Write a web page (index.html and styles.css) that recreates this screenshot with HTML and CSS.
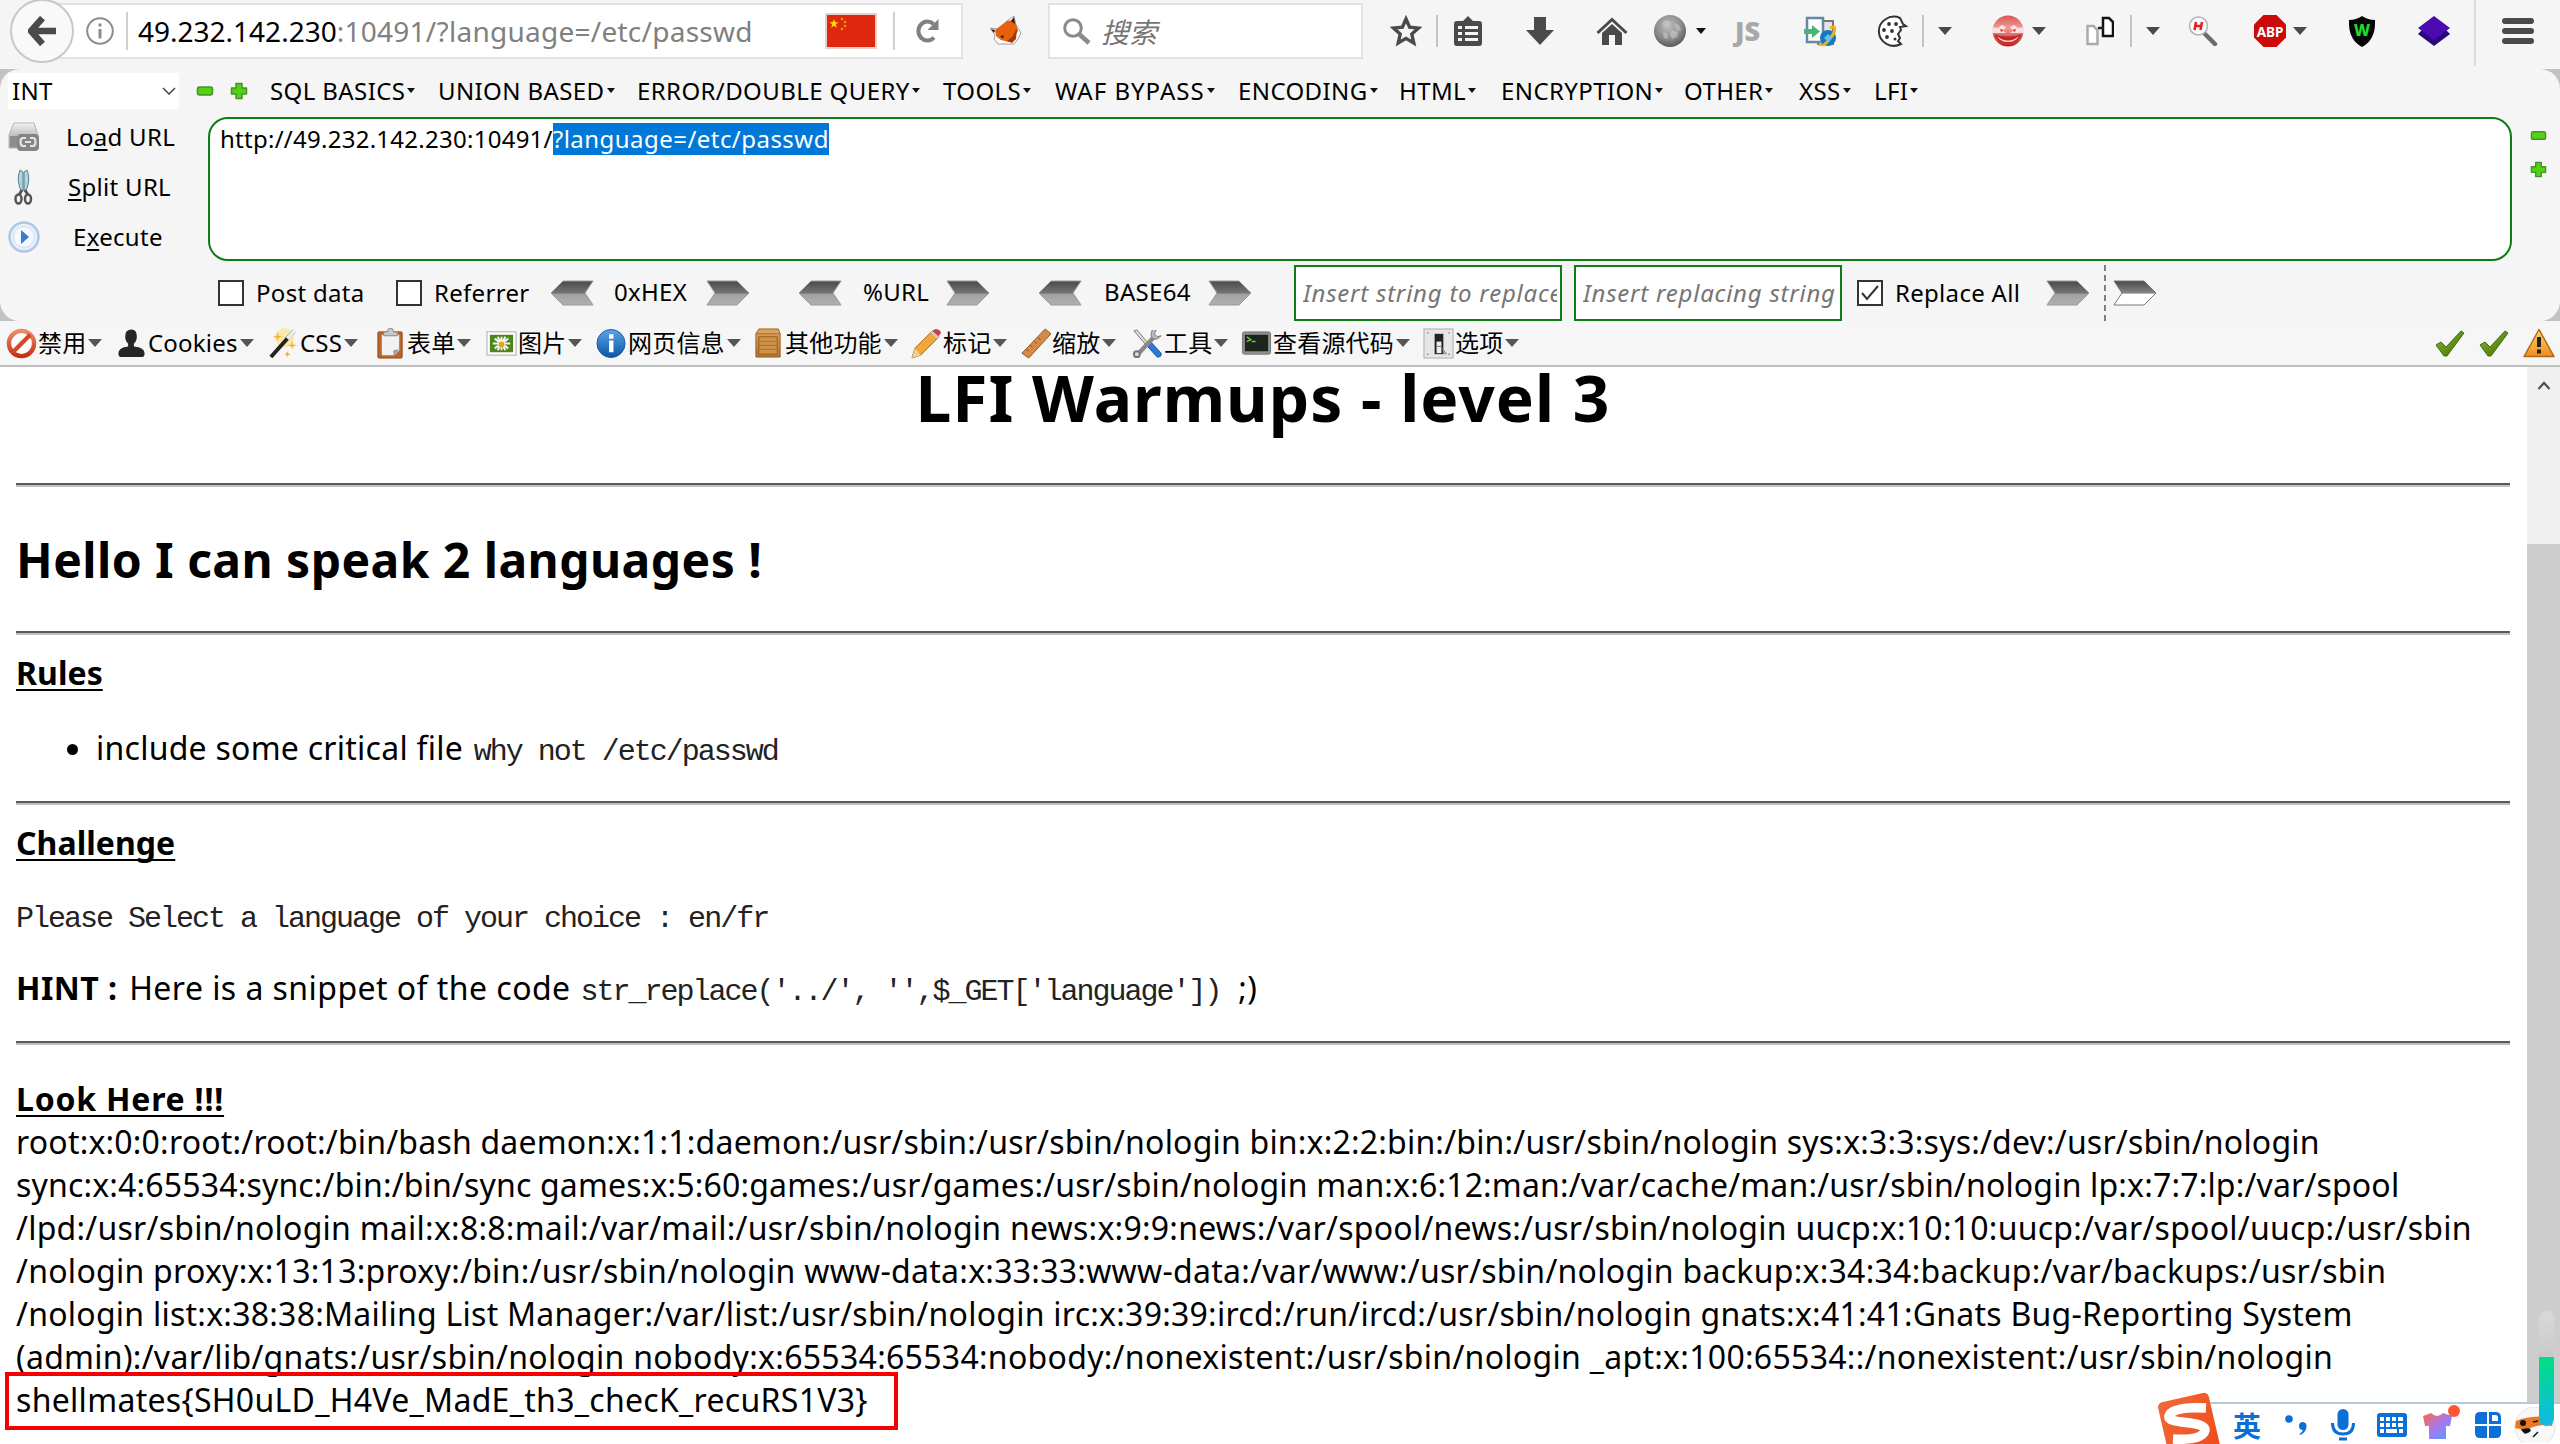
FILE: index.html
```html
<!DOCTYPE html>
<html lang="zh-CN">
<head>
<meta charset="utf-8">
<title>LFI Warmups - level 3</title>
<link rel="stylesheet" href="styles.css">
</head>
<body>
<svg width="0" height="0" class="defs">
  <defs>
    <linearGradient id="gArrow" x1="0" y1="0" x2="0" y2="1"><stop offset="0" stop-color="#4a4a4a"/><stop offset=".5" stop-color="#757575"/><stop offset=".55" stop-color="#a2a2a2"/><stop offset="1" stop-color="#b0b0b0"/></linearGradient>
    <linearGradient id="gArrowW" x1="0" y1="0" x2="0" y2="1"><stop offset="0" stop-color="#4a4a4a"/><stop offset=".5" stop-color="#858585"/><stop offset=".55" stop-color="#fff"/><stop offset="1" stop-color="#fff"/></linearGradient>
    <linearGradient id="gRed" x1="0" y1="0" x2="0" y2="1"><stop offset="0" stop-color="#ef8a6c"/><stop offset="1" stop-color="#c23310"/></linearGradient>
    <linearGradient id="gBlue" x1="0" y1="0" x2="0" y2="1"><stop offset="0" stop-color="#5aa5e6"/><stop offset="1" stop-color="#0b55a8"/></linearGradient>
    <linearGradient id="gWood" x1="0" y1="0" x2="0" y2="1"><stop offset="0" stop-color="#e0a561"/><stop offset="1" stop-color="#b47430"/></linearGradient>
    <linearGradient id="gGreen" x1="0" y1="0" x2="1" y2="1"><stop offset="0" stop-color="#8cb832"/><stop offset="1" stop-color="#3c6c00"/></linearGradient>
    <linearGradient id="gWarn" x1="0" y1="0" x2="0" y2="1"><stop offset="0" stop-color="#ffd860"/><stop offset="1" stop-color="#f08c1c"/></linearGradient>
    <linearGradient id="gSilver" x1="0" y1="0" x2="0" y2="1"><stop offset="0" stop-color="#f2f2f2"/><stop offset="1" stop-color="#8c8c8c"/></linearGradient>
    <radialGradient id="gGlobe" cx=".45" cy=".35" r=".65"><stop offset="0" stop-color="#bdbdbd"/><stop offset=".6" stop-color="#8e8e8e"/><stop offset="1" stop-color="#5a5a5a"/></radialGradient>
    <linearGradient id="gFace" x1="0" y1="0" x2="0" y2="1"><stop offset="0" stop-color="#d95454"/><stop offset=".4" stop-color="#f09a94"/><stop offset="1" stop-color="#c42020"/></linearGradient>
    <linearGradient id="gShirt" x1="0" y1="0" x2="1" y2="1"><stop offset="0" stop-color="#ff6a3c"/><stop offset=".5" stop-color="#a878f0"/><stop offset="1" stop-color="#4aa0ff"/></linearGradient>
    <linearGradient id="gLogo" x1="0" y1="0" x2="1" y2="1"><stop offset="0" stop-color="#f06a38"/><stop offset="1" stop-color="#f04a18"/></linearGradient>
    <symbol id="caret" viewBox="0 0 14 8"><path d="M0 0h14L7 8z" fill="#4a4a4a"/></symbol>
    <symbol id="left" viewBox="0 0 44 26"><path d="M13 1h30l-8 12 8 12H13L1 13z" fill="url(#gArrow)" stroke="#999"/></symbol>
    <symbol id="right" viewBox="0 0 44 26"><path d="M1 1h30l12 12-12 12H1l8-12z" fill="url(#gArrow)" stroke="#999"/></symbol>
    <symbol id="rightw" viewBox="0 0 44 26"><path d="M1 1h30l12 12-12 12H1l8-12z" fill="url(#gArrowW)" stroke="#777"/></symbol>
    <symbol id="minus" viewBox="0 0 18 18"><rect x="1.500" y="5" width="15" height="8" rx="2" fill="#4fd312" stroke="#4c8f2c" stroke-width="1.500"/></symbol>
    <symbol id="plus" viewBox="0 0 18 18"><path d="M6 1.500h6V6h4.500v6H12v4.500H6V12H1.500V6H6z" fill="#4fd312" stroke="#4c8f2c" stroke-width="1.500" stroke-linejoin="round"/></symbol>
    <symbol id="check" viewBox="0 0 30 27"><path d="M1 15l5-3 5 5L26 1l3 2-17 23H9z" fill="url(#gGreen)" stroke="#446c10"/></symbol>
  </defs>
</svg>

<header class="nav">
  <button class="back"><svg width="28" height="30" viewBox="0 0 28 30"><path d="M14.500 2L3 15l11.500 13M4 15h24" fill="none" stroke="#4a4a4a" stroke-width="6.500" stroke-linejoin="round"/></svg></button>
  <div class="urlbar">
    <svg class="info" width="28" height="28" viewBox="0 0 28 28"><circle cx="14" cy="14" r="12.800" fill="none" stroke="#8c8c8c" stroke-width="2"/><path d="M12.500 6.500h3v3h-3zM12.500 12h3v9.500h-3z" fill="#8c8c8c"/></svg>
    <i class="rule"></i>
    <span class="address"><b>49.232.142.230</b>:10491/?language=/etc/passwd</span>
    <svg class="flag" width="52" height="36" viewBox="0 0 52 36"><rect x="1" y="1" width="50" height="34" fill="#de2910" stroke="#e8cfc8" stroke-width="2"/><path d="M9 6l1.200 3.300h3.300l-2.700 2 1 3.400L9 12.700l-2.800 2 1-3.400-2.700-2h3.300z" fill="#ffde00"/><g fill="#ee9a08"><circle cx="17" cy="6" r="1.200"/><circle cx="20" cy="9" r="1.200"/><circle cx="20" cy="13" r="1.200"/><circle cx="17" cy="16" r="1.200"/></g></svg>
    <i class="rule"></i>
    <svg class="reload" width="26" height="24" viewBox="0 0 26 24"><path d="M19.500 5A9 9.500 0 1 0 20 18.500" fill="none" stroke="#808080" stroke-width="4"/><path d="M24.500 0v11H13.500z" fill="#808080"/></svg>
  </div>
  <svg width="32" height="30" viewBox="0 0 32 30"><path d="M0 12l8 1 9-8 7-5 2 9 5 8-3 6-4 5H8l-4-5 1-4z" fill="#fff" stroke="#888" stroke-width=".8"/><path d="M5 14l12-9 6-1 3 4 2 7-4 7-5 4-8-2-5-4z" fill="#e8600c"/><path d="M10 21l3-2 1 3zM21 5l3-4 1 7zM1 13l4 1-1 3z" fill="#311"/><path d="M17 25l5-4 5-9-1 11-4 4z" fill="#a33a08"/></svg>
  <div class="search"><svg width="29" height="27" viewBox="0 0 29 27"><circle cx="10" cy="10" r="8.300" fill="none" stroke="#8a8a8a" stroke-width="3"/><path d="M16 16l10 9" stroke="#8a8a8a" stroke-width="4.500"/></svg><em>搜索</em></div>
  <svg width="32" height="32" viewBox="0 0 32 32"><path d="M16 4l3.600 8.200 9 .9-6.800 6 2 8.900L16 23.400 8.200 28l2-8.900-6.800-6 9-.9z" fill="none" stroke="#4a4a4a" stroke-width="3.400"/></svg>
  <i class="rule short"></i>
  <svg width="28" height="30" viewBox="0 0 28 30"><path d="M3 5h6l5-5 5 5h6q3 0 3 3v19q0 3-3 3H3q-3 0-3-3V8q0-3 3-3z" fill="#4a4a4a"/><path d="M4 10h4v3H4zM11 10h13v3H11zM4 16h4v3H4zM11 16h13v3H11zM4 22h4v3H4zM11 22h13v3H11z" fill="#f5f5f5"/></svg>
  <svg width="28" height="28" viewBox="0 0 28 28"><path d="M8 0h12v13h8L14 28 0 13h8z" fill="#4a4a4a"/></svg>
  <svg width="32" height="28" viewBox="0 0 32 28"><path d="M1.500 16L16 2.500 30.500 16" fill="none" stroke="#4a4a4a" stroke-width="3"/><path d="M16 7L6 16v12h7V18h6v10h7V16z" fill="#4a4a4a"/></svg>
  <svg width="32" height="32" viewBox="0 0 32 32"><circle cx="16" cy="16" r="16" fill="url(#gGlobe)"/><path d="M8 8l4-3 5 2-2 4-5 2zM20 8l5 2 2 5-4 1zM9 17l4 1 1 6-4-1zM18 15l6 2-1 5-5 2-2-4z" fill="#c9c9c9" opacity=".6"/></svg>
  <svg width="10" height="6"><path d="M0 0h10L5 6z" fill="#111"/></svg>
  <span class="js">JS</span>
  <svg width="32" height="30" viewBox="0 0 32 30"><path d="M14 5h15v23H14z" fill="#e4e4e4" stroke="#777" stroke-width="2"/><path d="M3 2h16v24H3z" fill="#fff" stroke="#6688a0" stroke-width="2.500"/><path d="M0 13h8V9l8 6.500L8 22v-4H0z" fill="#45b878"/><circle cx="24" cy="22" r="8" fill="#1678c0"/><path d="M17 27q-3 5 3 2Q30 20 31 13q0-3-5-1" fill="none" stroke="#f0b020" stroke-width="3"/><path d="M20 22l4-4 4 4-4 4z" fill="#5cc4f0"/></svg>
  <svg width="32" height="32" viewBox="0 0 32 32"><path d="M24 3A15 14.500 0 1 0 25 29L22 26l2-3-2-4 3-4-1-3 6-1-3-2z" fill="#fff" stroke="#333" stroke-width="2"/><g fill="#333"><circle cx="13" cy="9" r="1.900"/><circle cx="20" cy="9" r="1.900"/><circle cx="8" cy="15" r="1.900"/><circle cx="16" cy="16" r="1.900"/><circle cx="11" cy="22" r="1.900"/><circle cx="19" cy="24" r="1.500"/></g></svg>
  <i class="rule short"></i>
  <svg width="14" height="8"><use href="#caret"/></svg>
  <svg width="32" height="32" viewBox="0 0 32 32"><circle cx="16" cy="16" r="15.500" fill="url(#gFace)"/><path d="M0 12l6 1 4-3 4 2-3 4 3 2H0zM32 12l-6 1-4-3-4 2 3 4-3 2h14z" fill="#f7e0dc"/><path d="M8 14l4 1-3 2zM24 14l-4 1 3 2z" fill="#cf4040"/><path d="M2 19q14 5 28 0-3 9-14 9T2 19z" fill="#c62424"/><path d="M5 21q11 9 22 0-3 6-11 6T5 21z" fill="#f3cfcb"/></svg>
  <svg width="14" height="8"><use href="#caret"/></svg>
  <svg width="28" height="30" viewBox="0 0 28 30"><path d="M1.500 10h6l4 4v14h-10z" fill="#fff" stroke="#aaa" stroke-width="2.500"/><path d="M17 2h6l4 4v14H17z" fill="#fff" stroke="#111" stroke-width="2.500"/><path d="M12 12h6" stroke="#222" stroke-width="2.500"/></svg>
  <i class="rule short"></i>
  <svg width="14" height="8"><use href="#caret"/></svg>
  <svg width="30" height="30" viewBox="0 0 30 30"><path d="M17 18l10 10" stroke="#6a6a6a" stroke-width="4.500" stroke-linecap="round"/><circle cx="10.500" cy="10" r="9" fill="#fbfbfb" stroke="#b4b4b4" stroke-width="1.500"/><path d="M8 6L6.500 14M14 6l-1.500 8M8 10h5" stroke="#e02020" stroke-width="2.500"/></svg>
  <svg width="32" height="32" viewBox="0 0 32 32"><path d="M9.500 0h13L32 9.500v13L22.500 32h-13L0 22.500v-13z" fill="#cc0a0a"/><text x="16" y="21.500" text-anchor="middle" class="abp">ABP</text></svg>
  <svg width="14" height="8"><use href="#caret"/></svg>
  <svg width="26" height="31" viewBox="0 0 26 31"><path d="M13 0q6 4 13 4 1 20-13 27Q-1 24 0 4q7 0 13-4z" fill="#050505"/><text x="13" y="20" text-anchor="middle" class="wot">W</text></svg>
  <svg width="32" height="30" viewBox="0 0 32 30"><path d="M4 14L0 18l16 12 16-12-4-4z" fill="#2a0a78"/><path d="M16 0l16 12-16 12L0 12z" fill="#4a0cb0"/></svg>
  <i class="rule tall"></i>
  <svg width="32" height="26" viewBox="0 0 32 26"><g fill="#4a4a4a"><rect width="32" height="6" rx="3"/><rect y="10" width="32" height="6" rx="3"/><rect y="20" width="32" height="6" rx="3"/></g></svg>
</header>

<section class="hackbar-wrap"><div class="hackbar">
  <div class="menus">
    <div class="select">INT<svg width="14" height="8" viewBox="0 0 14 8"><path d="M1 1l6 6 6-6" fill="none" stroke="#444" stroke-width="1.500"/></svg></div>
    <svg width="18" height="18"><use href="#minus"/></svg>
    <svg width="18" height="18"><use href="#plus"/></svg>
    <span class="menu">SQL BASICS</span><span class="menu">UNION BASED</span><span class="menu">ERROR/DOUBLE QUERY</span><span class="menu">TOOLS</span><span class="menu waf">WAF BYPASS</span><span class="menu">ENCODING</span><span class="menu">HTML</span><span class="menu">ENCRYPTION</span><span class="menu">OTHER</span><span class="menu">XSS</span><span class="menu">LFI</span>
  </div>
  <div class="middle">
    <div class="actions">
      <div><svg width="32" height="30" viewBox="0 0 32 30"><path d="M6 1h20l4 12v13H1V13z" fill="url(#gSilver)" stroke="#b4b4b4"/><path d="M2 14h10v10H2z" fill="#8c8c8c"/><rect x="9" y="12" width="22" height="17" rx="4" fill="#858585"/><path d="M18 16h-3q-2.500 0-2.500 4t2.500 4h3M22 16h3q2.500 0 2.500 4t-2.500 4h-3M17 20h6" fill="none" stroke="#e4e4e4" stroke-width="2.200"/></svg><span>Lo<u>a</u>d URL</span></div>
      <div><svg width="32" height="36" viewBox="0 0 32 36"><path d="M12 1Q8 10 13 22h2V3zM19 1q4 9-1 21h-2V3z" fill="#b5d3dc" stroke="#5c8290"/><path d="M14 21l-3 5M17 21l3 5" stroke="#555" stroke-width="3"/><ellipse cx="10.500" cy="30" rx="3" ry="4.500" fill="none" stroke="#555" stroke-width="2.500"/><ellipse cx="20" cy="30" rx="3" ry="4.500" fill="none" stroke="#555" stroke-width="2.500"/></svg><span class="s2"><u>S</u>plit URL</span></div>
      <div><svg width="32" height="32" viewBox="0 0 32 32"><circle cx="16" cy="16" r="14.500" fill="#e8f0fa" stroke="#b0c8e8" stroke-width="2.500"/><circle cx="16" cy="16" r="10.500" fill="#f4f8ff" stroke="#d0dff2"/><path d="M13 9l8 7-8 7z" fill="#3a78c8"/></svg><span class="s3">E<u>x</u>ecute</span></div>
    </div>
    <div class="textarea">http://49.232.142.230:10491/<mark>?language=/etc/passwd</mark></div>
    <div class="resize"><svg width="17" height="17"><use href="#minus"/></svg><svg width="17" height="17"><use href="#plus"/></svg></div>
  </div>
  <div class="options">
    <i class="box"></i><span class="opt">Post data</span>
    <i class="box"></i><span class="opt">Referrer</span>
    <svg width="44" height="26"><use href="#left"/></svg><span class="enc">0xHEX</span><svg width="44" height="26"><use href="#right"/></svg>
    <svg width="44" height="26"><use href="#left"/></svg><span class="enc">%URL</span><svg width="44" height="26"><use href="#right"/></svg>
    <svg width="44" height="26"><use href="#left"/></svg><span class="enc">BASE64</span><svg width="44" height="26"><use href="#right"/></svg>
    <div class="field"><div>Insert string to replace</div></div>
    <div class="field"><div>Insert replacing string</div></div>
    <i class="box"><svg width="22" height="22" viewBox="0 0 22 22"><path d="M3 11l5 6L19 4" fill="none" stroke="#333" stroke-width="2"/></svg></i><span class="opt">Replace All</span>
    <svg width="44" height="26"><use href="#right"/></svg>
    <i class="dash"></i>
    <svg width="44" height="26"><use href="#rightw"/></svg>
  </div>
</div></section>

<nav class="webdev">
  <div class="tool"><svg viewBox="0 0 32 32"><circle cx="16" cy="16" r="13" fill="#fff" stroke="url(#gRed)" stroke-width="4.500"/><path d="M7 25L25 7" stroke="#d04a28" stroke-width="4.500"/></svg>禁用</div>
  <div class="tool"><svg viewBox="0 0 32 32"><path d="M16 1.500q5.500 0 5.500 7 0 5-3 7.500v3q11 1 11 7 0 4-3 4h-21q-3 0-3-4 0-6 10-7v-3q-3-2.500-3-7.500 0-7 6.500-7z" fill="#262626"/></svg>Cookies</div>
  <div class="tool"><svg viewBox="0 0 32 32"><circle cx="17" cy="10" r="10" fill="#ffe28a" opacity=".7"/><path d="M10 4l1 4 4 1-4 1-1 4-1-4-4-1 4-1zM25 13l1 4 4 1-4 1-1 3-1-3-4-1 4-1zM20 24l1 2 2 1-2 1-1 2-1-2-2-1 2-1z" fill="#f5b52c"/><path d="M3 30L27 3" stroke="#222" stroke-width="4"/><path d="M20 11l8-9" stroke="#eee" stroke-width="4"/></svg>CSS</div>
  <div class="tool"><svg viewBox="0 0 32 32"><rect x="3" y="4" width="25" height="27" rx="1" fill="#b9672a" stroke="#8f4714"/><path d="M7 7h18v16l-5 5H7z" fill="#f2f2f2"/><path d="M25 22l-6 1v6z" fill="#999"/><path d="M9 8V4h4q0-4 3-4t3 4h4v4z" fill="#c8c8c8" stroke="#888"/></svg>表单</div>
  <div class="tool"><svg viewBox="0 0 32 32"><rect x="1" y="4" width="30" height="24" fill="#fff" stroke="#aaa"/><rect x="4" y="7" width="24" height="18" fill="#4e8420"/><path d="M16 9v14M7 16h18M9 11l14 10M23 11L9 21M12 9l8 14M20 9l-8 14" stroke="#f2f4ee" stroke-width="2"/><circle cx="16" cy="17" r="3" fill="#eaa020"/></svg>图片</div>
  <div class="tool"><svg viewBox="0 0 32 32"><circle cx="15.500" cy="16" r="14.500" fill="url(#gBlue)" stroke="#1a5ca8"/><path d="M13.500 6.500h4.500v4.500h-4.500zM13.500 13H18v12h-4.500z" fill="#fff"/></svg>网页信息</div>
  <div class="tool"><svg viewBox="0 0 32 32"><path d="M6 1h20l2 5v24H3V6z" fill="url(#gWood)" stroke="#96601f"/><rect x="6" y="9" width="19" height="18" fill="#cf9148" stroke="#96601f"/><path d="M3 6h25M6 14h19M6 18h19M6 22h19" stroke="#a87030"/></svg>其他功能</div>
  <div class="tool"><svg viewBox="0 0 32 32"><path d="M1 31l3-10L22 3l7 6L10 28z" fill="#f0a83c" stroke="#a86a20"/><path d="M22 3l3-2q5 0 6 4l-3 4z" fill="#c8404c"/><path d="M20 5l2-2 7 6-2 2z" fill="#ccc"/><path d="M1 31l3-10 6 7z" fill="#eecf9c"/></svg>标记</div>
  <div class="tool"><svg viewBox="0 0 32 32"><path d="M2 26L26 1l6 5L9 31z" fill="#d28c44" stroke="#8e5620"/><path d="M7 22l2 2M11 18l2 2M15 14l2 2M19 10l2 2" stroke="#7a4818"/></svg>缩放</div>
  <div class="tool"><svg viewBox="0 0 32 32"><path d="M2 3l3-1 12 14-2 2z" fill="#ddd" stroke="#777"/><path d="M16 19l4-4 10 11q1 4-4 4z" fill="#2f78d4" stroke="#164f9c"/><path d="M6 27L23 9" stroke="#888" stroke-width="4.500"/><circle cx="5" cy="27" r="3" fill="#ddd" stroke="#777" stroke-width="2"/><path d="M21 2q-3 6 1 9 4 2 8-3l-4 1-3-3 2-4" fill="#bbb" stroke="#777"/></svg>工具</div>
  <div class="tool"><svg viewBox="0 0 32 32"><rect x="1.500" y="4" width="29" height="23" rx="2" fill="#8f8f8f" stroke="#777"/><rect x="4" y="7" width="24" height="17" fill="#1c241c"/><path d="M6 9l4 3-4 2M11 14h4" fill="none" stroke="#6ad030" stroke-width="1.500"/></svg>查看源代码</div>
  <div class="tool"><svg viewBox="0 0 32 32"><rect x="1" y="1" width="30" height="30" fill="#e6e6e6" stroke="#aaa"/><path d="M12 6h9v21h-9z" fill="#222"/><path d="M14 14h5v12h-5z" fill="#eee"/><path d="M14 19h5" stroke="#777"/><path d="M20 20l5 7h-4z" fill="#999"/><g fill="#999"><circle cx="5" cy="5" r="1"/><circle cx="27" cy="5" r="1"/><circle cx="5" cy="27" r="1"/><circle cx="27" cy="27" r="1"/></g></svg>选项</div>
  <div class="status">
    <svg width="30" height="27"><use href="#check"/></svg>
    <svg width="30" height="27"><use href="#check"/></svg>
    <svg width="32" height="30" viewBox="0 0 32 30"><path d="M16 1.500L31 28.500H1z" fill="url(#gWarn)" stroke="#b0651c" stroke-width="1.500" stroke-linejoin="round"/><path d="M14 9h4v10h-4zM14 21.500h4v4h-4z" fill="#222"/></svg>
  </div>
</nav>

<div class="viewport">
  <main class="page">
    <h1>LFI Warmups - level 3</h1>
    <hr>
    <h2>Hello I can speak 2 languages !</h2>
    <hr>
    <h3>Rules</h3>
    <ul><li>include some critical file <code>why not /etc/passwd</code></li></ul>
    <hr>
    <h3>Challenge</h3>
    <p class="choice"><code>Please Select a language of your choice : en/fr</code></p>
    <p class="hint"><b>HINT :</b> Here is a snippet of the code <code>str_replace('../', '',$_GET['language'])</code> ;)</p>
    <hr>
    <h3 class="look">Look Here !!!</h3>
    <div class="dump">
      <div class="l1">root:x:0:0:root:/root:/bin/bash daemon:x:1:1:daemon:/usr/sbin:/usr/sbin/nologin bin:x:2:2:bin:/bin:/usr/sbin/nologin sys:x:3:3:sys:/dev:/usr/sbin/nologin</div>
      <div class="l2">sync:x:4:65534:sync:/bin:/bin/sync games:x:5:60:games:/usr/games:/usr/sbin/nologin man:x:6:12:man:/var/cache/man:/usr/sbin/nologin lp:x:7:7:lp:/var/spool</div>
      <div>/lpd:/usr/sbin/nologin mail:x:8:8:mail:/var/mail:/usr/sbin/nologin news:x:9:9:news:/var/spool/news:/usr/sbin/nologin uucp:x:10:10:uucp:/var/spool/uucp:/usr/sbin</div>
      <div class="l4">/nologin proxy:x:13:13:proxy:/bin:/usr/sbin/nologin www-data:x:33:33:www-data:/var/www:/usr/sbin/nologin backup:x:34:34:backup:/var/backups:/usr/sbin</div>
      <div>/nologin list:x:38:38:Mailing List Manager:/var/list:/usr/sbin/nologin irc:x:39:39:ircd:/run/ircd:/usr/sbin/nologin gnats:x:41:41:Gnats Bug-Reporting System</div>
      <div class="l6">(admin):/var/lib/gnats:/usr/sbin/nologin nobody:x:65534:65534:nobody:/nonexistent:/usr/sbin/nologin _apt:x:100:65534::/nonexistent:/usr/sbin/nologin</div>
      <div class="secret">shellmates{SH0uLD_H4Ve_MadE_th3_checK_recuRS1V3}</div>
    </div>
  </main>
  <aside class="scrollbar"><svg width="14" height="10" viewBox="0 0 14 10"><path d="M1.500 8L7 2l5.500 6" fill="none" stroke="#505050" stroke-width="2.200"/></svg><div class="thumb"></div></aside>
</div>

<div class="ime">
  <svg class="logo" width="66" height="54" viewBox="0 0 66 54"><rect x="7" y="5" width="52" height="62" rx="5" transform="rotate(-13 33 30)" fill="url(#gLogo)"/><path d="M51 16Q17 14 14 24c-2 9 36 4 36 14Q48 49 18 47" fill="none" stroke="#fff" stroke-width="9.500"/></svg>
  <span class="lang">英</span>
  <svg width="22" height="20" viewBox="0 0 22 20"><circle cx="4" cy="4" r="3.800" fill="#0b6fd8"/><path d="M18 7a4 4 0 0 1 3.500 4q0 6-6 9l-1-1q3-2 3.500-4a4 4 0 0 1 0-8z" fill="#0b6fd8"/></svg>
  <svg width="24" height="32" viewBox="0 0 24 32"><rect x="6.500" width="11" height="21" rx="5.500" fill="#0b6fd8"/><path d="M1.500 14q0 11 10.500 11t10.500-11M8 30h8" fill="none" stroke="#0b6fd8" stroke-width="3"/></svg>
  <svg width="30" height="24" viewBox="0 0 30 24"><rect width="30" height="24" rx="3" fill="#0b6fd8"/><g fill="#fff"><path d="M3 4h4v4H3zM9 4h4v4H9zM15 4h4v4h-4zM21 4h5v4h-5zM3 10h4v4H3zM9 10h4v4H9zM15 10h4v4h-4zM21 10h5v4h-5zM3 16h4v4H3zM9 16h11v4H9zM22 16h4v4h-4z"/></g></svg>
  <svg class="skin" width="38" height="36" viewBox="0 0 38 36"><path d="M1 11l8-3q6 6 12 0l9 3-2 10h-4v13H7V21H3z" fill="url(#gShirt)"/><circle cx="32" cy="6" r="6" fill="#ff5533"/></svg>
  <svg width="26" height="26" viewBox="0 0 26 26"><g fill="#0b6fd8"><path d="M5 0h7v12H0V5q0-5 5-5zM0 14h12v12H5q-5 0-5-5zM14 14h12v7q0 5-5 5h-7z"/></g><path d="M15.500 1.500h5q4 0 4 4v5h-9z" fill="none" stroke="#0b6fd8" stroke-width="3"/></svg>
  <svg width="44" height="36" viewBox="0 0 44 36"><circle cx="22" cy="20" r="20" fill="#f8f8f8" stroke="#e2e2e2"/><path d="M3 14q12-6 38-4l-2 9q-14-3-26 4l-11-2z" fill="#e87828"/><circle cx="10" cy="16" r="3" fill="#111"/><path d="M9 23q8-2 8 0t-5 3zM20 15l5-1M20 30l5-5" fill="#111" stroke="#111" stroke-width="1.500"/></svg>
</div>
<div class="meter"></div>
</body>
</html>
```
FILE: styles.css
```css
*, *::after { box-sizing: border-box; }
body {
  margin: 0; width: 2560px; height: 1444px; overflow: hidden; position: relative;
  background: #fff; color: #000;
  font-family: "Noto Sans", "Noto Sans CJK SC", sans-serif; font-size: 24px; letter-spacing: .3px;
}
svg { display: block; flex: none; }
.defs { position: absolute; }
.rule { display: block; width: 2px; height: 38px; background: #d0d0d0; }
.rule.short { height: 32px; background: #c4c4c4; }
.rule.tall { height: 66px; background: #dcdcdc; align-self: start; }

.nav {
  height: 69px; padding: 0 0 7px 10px; background: #f5f5f5;
  display: grid; align-items: center; grid-template-rows: 62px;
  grid-template-columns: 46px 934px 58px 342px 46px 18px 72px 70px 58px 42px 36px 72px 72px 46px 16px 54px 40px 54px 44px 16px 42px 66px 39px 56px 69px 56px 28px 58px;
}
.back {
  width: 64px; height: 64px; padding: 0; border: 2px solid #c8c8c8; border-radius: 50%;
  background: #f9f9f9; display: grid; place-items: center; z-index: 1;
}
.urlbar {
  width: 907px; height: 56px; border: 2px solid #e2e2e2; background: #fff; z-index: 0;
  display: flex; align-items: center; padding-left: 28px; font-size: 28px;
}
.urlbar .info { margin-right: 12px; }
.address { width: 686px; margin-left: 10px; color: #808080; letter-spacing: .26px; white-space: nowrap; }
.address b { font-weight: 400; color: #000; letter-spacing: 0; }
.flag { margin: 0 16px 0 1px; }
.reload { margin-left: 19px; }
.search { width: 315px; height: 56px; border: 2px solid #e2e2e2; background: #fff; display: flex; align-items: center; padding-left: 13px; font-size: 28px; color: #757575; }
.search em { margin-left: 9px; letter-spacing: 0; }
.js { font: 900 27px "Noto Sans", sans-serif; color: #a8a8a8; letter-spacing: 0; padding: 0 0 1px 3px; }
.abp { font: 700 13.500px "Noto Sans", sans-serif; letter-spacing: 0; fill: #fff; }
.wot { font: 800 16px "Noto Sans", sans-serif; letter-spacing: 0; fill: #1be02a; }

.hackbar-wrap { background: #c2c2c2; }
.hackbar { height: 252px; background: #f5f5f5; border-radius: 20px; }
.menus {
  height: 43px; padding-left: 8px; display: grid; align-items: center;
  grid-template-columns: 188px 34px 40px 168px 199px 306px 112px 183px 161px 102px 183px 115px 75px 60px;
}
.select { width: 171px; height: 36px; background: #fff; display: flex; align-items: center; justify-content: space-between; padding: 0 3px 0 4px; }
.menu { display: flex; align-items: center; gap: 2px; white-space: nowrap; letter-spacing: .4px; }
.menu::after { content: ""; border: 4.500px solid transparent; border-top: 5px solid #111; border-bottom: 0; }
.menu.waf { letter-spacing: 1px; }
.middle { display: flex; height: 153px; }
.actions { width: 208px; }
.actions div { height: 50px; display: flex; align-items: center; padding-left: 8px; }
.actions span { margin: 0 0 2px 26px; }
.actions .s2 { margin-left: 28px; }
.actions .s3 { margin-left: 33px; }
u { text-underline-offset: 3px; text-decoration-thickness: 2px; text-decoration-skip-ink: none; }
.textarea {
  width: 2304px; height: 144px; margin-top: 5px; border: 2px solid #0d7d14; border-radius: 20px;
  background: #fff; padding: 4px 10px; line-height: 32px; letter-spacing: .26px;
}
mark { display: inline-block; height: 32px; background: #0078d7; color: #fff; letter-spacing: .46px; }
.resize { margin: 15px 0 0 18px; display: flex; flex-direction: column; gap: 17px; }
.options {
  height: 56px; padding-left: 218px; display: grid; align-items: center; white-space: nowrap;
  grid-template-columns: 38px 140px 38px 116px 64px 92px 92px 65px 83px 92px 66px 104px 86px 280px 283px 38px 151px 58px 9px 45px;
}
.box { width: 26px; height: 26px; border: 2px solid #333; background: #fff; }
.opt { padding-bottom: 2px; }
.enc { padding-bottom: 4px; }
.field { width: 268px; height: 56px; border: 2px solid #0d7d14; background: #fff; padding: 0 3px 0 7px; display: flex; align-items: center; font-style: italic; color: #757575; letter-spacing: .75px; }
.field div { overflow: hidden; padding-bottom: 2px; }
.dash { height: 56px; border-left: 2px dashed #808080; }

.webdev {
  height: 46px; background: #f6f6f6; border-bottom: 2px solid #c0c0c0; padding-left: 6px;
  display: grid; align-items: center; white-space: nowrap;
  grid-template-columns: 110px 152px 107px 111px 110px 157px 158px 109px 112px 109px 182px 1012px 119px;
}
.tool { display: flex; align-items: center; letter-spacing: .2px; line-height: 32px; }
.tool svg { width: 31px; height: 31px; margin-right: 1px; }
.tool::after { content: ""; margin-left: 2px; border: 7px solid transparent; border-top: 8px solid #555; border-bottom: 0; }
.status { display: flex; align-items: center; gap: 14px; }

.viewport { height: 1077px; display: flex; }
.page { width: 2527px; padding: 0 17px 0 16px; font-size: 32px; line-height: 43px; letter-spacing: .25px; white-space: nowrap; }
h1, h2, h3, p, ul { margin: 0; }
h1 { font-size: 64px; line-height: 62px; letter-spacing: 1.030px; text-align: center; }
h2 { font-size: 48px; line-height: 64px; letter-spacing: .44px; margin: 41px 0 39px; }
h3 { font-size: 32px; margin-top: 16px; letter-spacing: .050px; text-decoration: underline; text-decoration-thickness: 2px; text-underline-offset: 4px; text-decoration-skip-ink: none; }
.look { letter-spacing: .79px; margin-top: 32px; }
hr { margin: 0; border: 0; height: 4px; background: #c0c0c0; border-top: 2px solid #5a5a5a; }
h1 + hr { margin-top: 54px; }
ul { margin: 32px 0; padding-left: 80px; }
.choice { margin-top: 29px; height: 43px; }
.hint { margin: 30px 0 32px; letter-spacing: .45px; height: 43px; }
.hint b { margin-right: 3px; }
.hint code { margin: 0 9px 0 1px; }
code { font: 30px/1 "Liberation Mono", monospace; letter-spacing: -2px; color: #222; }
li code { margin-left: 2px; }
.dump .l1 { letter-spacing: .2px; }
.dump .l2 { letter-spacing: .17px; }
.dump .l4 { letter-spacing: .27px; }
.dump .l6 { letter-spacing: .29px; }
.dump .secret { position: relative; letter-spacing: .3px; }
.secret::after { content: ""; position: absolute; left: -11px; top: -6px; width: 893px; height: 58px; border: 4px solid #f40000; }
.scrollbar { width: 33px; background: #f0f0f0; padding-top: 14px; }
.scrollbar svg { margin-left: 10px; }
.thumb { margin-top: 153px; height: 900px; background: #cdcdcd; }

/* Floating input-method bar in the corner of the desktop */
.ime {
  position: absolute; left: 2200px; top: 1402px; width: 360px; height: 42px;
  background: #fff; border-top: 2px solid #b9c9dc; display: grid; align-items: center;
  grid-template-columns: 33px 52px 46px 46px 45px 53px 38px 46px;
}
.ime .logo { margin: -12px 0 0 -45px; }
.ime .skin { margin-top: -5px; }
.lang { font: 700 28px/36px "Noto Sans CJK SC", sans-serif; color: #0b6fd8; letter-spacing: 0; }
.meter { position: absolute; left: 2539px; top: 1311px; width: 15px; height: 115px; border-radius: 8px; background: linear-gradient(#d9d9d9, #c9c9c9 40%, #00df80 40%, #10b8e8); }
```
